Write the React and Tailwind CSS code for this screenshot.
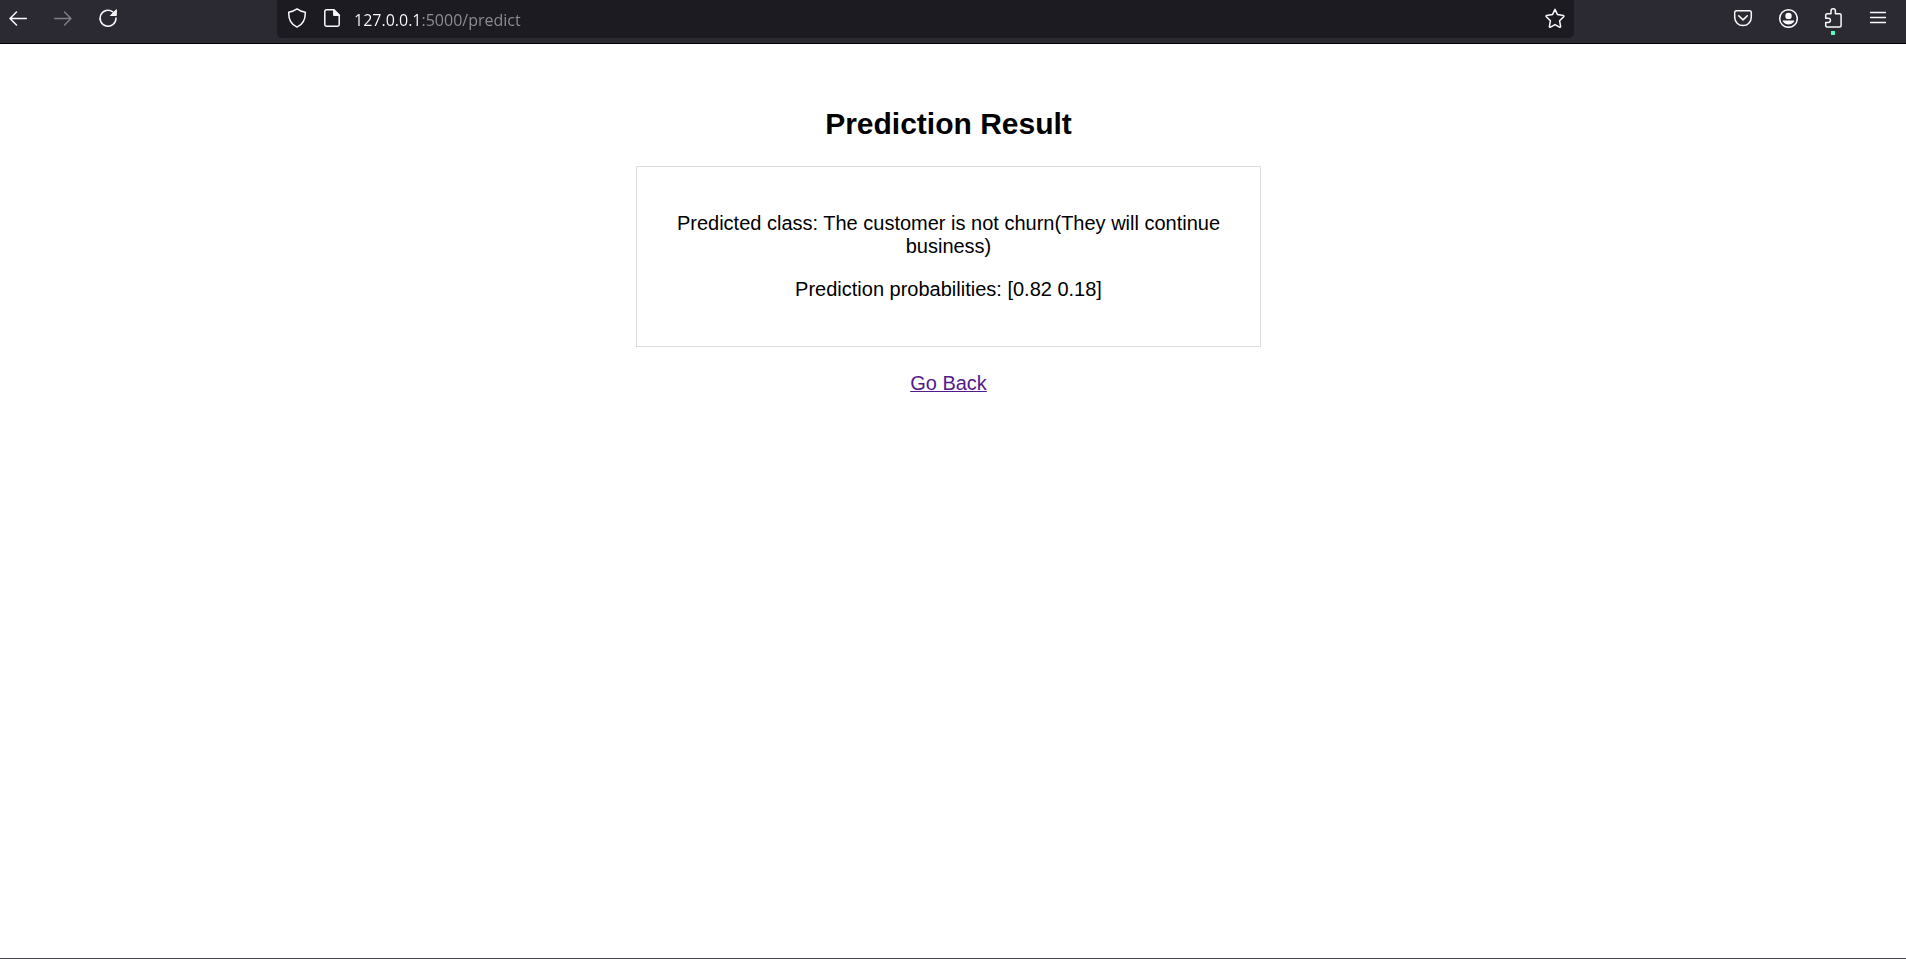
import React from "react";

function Icon({ children, className = "" }) {
  return (
    <svg
      viewBox="0 0 20 20"
      className={`h-5 w-5 shrink-0 ${className}`}
      fill="none"
      stroke="currentColor"
      strokeWidth="1.5"
      strokeLinecap="round"
      strokeLinejoin="round"
      aria-hidden="true"
    >
      {children}
    </svg>
  );
}

function ToolbarButton({ label, children, disabled = false }) {
  return (
    <button
      type="button"
      aria-label={label}
      disabled={disabled}
      className="relative flex h-9 w-9 items-center justify-center text-[#fbfbfe] disabled:text-[#7f7e85]"
    >
      {children}
    </button>
  );
}

function AddressBar() {
  return (
    <div className="flex h-[38px] flex-1 items-start rounded-b-[5px] bg-[#1c1b22] px-[9px] text-[#fbfbfe]">
      <button type="button" aria-label="Tracking protection" className="ml-px flex h-9 w-5 items-center">
        <Icon>
          <path d="M10 .9 C12.3 2.6 15.2 3.7 18.3 4.2 C18.5 11.2 15.9 16.6 10 19.1 C4.1 16.6 1.5 11.2 1.7 4.2 C4.8 3.7 7.7 2.6 10 .9Z" />
        </Icon>
      </button>
      <button type="button" aria-label="Site information" className="ml-[15px] flex h-9 w-5 items-center">
        <Icon>
          <path d="M12 1.8H4.4A1.6 1.6 0 0 0 2.8 3.4v13.2a1.6 1.6 0 0 0 1.6 1.6h11.2a1.6 1.6 0 0 0 1.6-1.6V7z" />
          <path d="M11.6 1.8v5.6h5.6z" fill="currentColor" strokeWidth="1" />
        </Icon>
      </button>
      <input
        type="text"
        aria-label="Address"
        defaultValue="127.0.0.1:5000/predict"
        spellCheck={false}
        className="ml-3 h-10 min-w-0 flex-1 bg-[linear-gradient(to_right,#ffffff_66px,#8f8f97_66px)] bg-clip-text p-0 font-['Open_Sans',sans-serif] text-base text-transparent caret-white outline-none"
      />
      <button type="button" aria-label="Bookmark this page" className="flex h-9 w-5 items-center">
        <Icon>
          <path d="M10 1.4l2.5 5.2 5.8.8a.8.8 0 0 1 .4 1.3l-4.1 4.1 1 5.6a.75.75 0 0 1-1.1.8L10 16.6l-4.5 2.6a.75.75 0 0 1-1.1-.8l1-5.6L1.3 8.7a.8.8 0 0 1 .4-1.3l5.8-.8z" />
        </Icon>
      </button>
    </div>
  );
}

function BrowserToolbar() {
  return (
    <header className="flex h-11 items-start gap-[151px] border-b border-black bg-[#2b2a33] pr-2.5">
      <nav aria-label="History" className="flex gap-[9px]">
        <ToolbarButton label="Back">
          <Icon>
            <path d="M18.3 10.5H2M8.500 4L2 10.500l6.500 6.500" />
          </Icon>
        </ToolbarButton>
        <ToolbarButton label="Forward" disabled>
          <Icon>
            <path d="M1.700 10.500H18M11.500 4l6.500 6.500-6.500 6.500" />
          </Icon>
        </ToolbarButton>
        <ToolbarButton label="Reload">
          <Icon>
            <path d="M18 10A8 8 0 1 1 14.800 3.800" />
            <path d="M18.300 2v5.500h-5.500z" fill="currentColor" strokeWidth="1" />
          </Icon>
        </ToolbarButton>
      </nav>

      <AddressBar />

      <div className="flex gap-[9px]">
        <ToolbarButton label="Save to Pocket">
          <Icon>
            <path d="M3.300 2.700h13.400a1.600 1.600 0 0 1 1.600 1.600v5A8.300 8.300 0 0 1 1.700 9.300v-5a1.600 1.600 0 0 1 1.600-1.600z" />
            <path d="M5.700 7.700L10 11.900l4.300-4.200" />
          </Icon>
        </ToolbarButton>
        <ToolbarButton label="Account">
          <Icon>
            <circle cx="10.500" cy="10.500" r="8.800" />
            <circle cx="10.500" cy="7.900" r="3.200" fill="currentColor" stroke="none" />
            <path d="M5.300 12.600h10.400c.5 0 .7.400.4.900-2.600 4-8.600 4-11.200 0-.3-.5-.1-.9.4-.9z" fill="currentColor" stroke="none" />
          </Icon>
        </ToolbarButton>
        <ToolbarButton label="Extensions">
          <Icon>
            <path d="M8 5.700V3a2.200 2.200 0 0 1 4.400 0v2.700h4.200a1.500 1.500 0 0 1 1.500 1.500v10.300a1.500 1.500 0 0 1-1.500 1.500H4.200a1.500 1.500 0 0 1-1.500-1.500v-3.100h2.700a2 2 0 0 0 0-4.100H2.700V7.200a1.500 1.500 0 0 1 1.500-1.500z" />
          </Icon>
          <span className="absolute top-[31px] left-4 h-1 w-1 bg-[#54ffbd]" />
        </ToolbarButton>
        <ToolbarButton label="Menu">
          <Icon>
            <path d="M2.500 4.500h15M2.500 9.500h15M2.500 14.500h15" strokeWidth="1.300" />
          </Icon>
        </ToolbarButton>
      </div>
    </header>
  );
}

export default function App() {
  return (
    <div className="flex min-h-screen flex-col border-b border-[#4a4950] bg-white">
      <BrowserToolbar />
      <main className="flex flex-1 flex-col items-center pt-[62px] pr-[25px] pl-4 text-center font-['Liberation_Sans',Arial,sans-serif] text-[20px] leading-[23px] text-black">
        <h2 className="text-[30px] leading-[35px] font-bold">Prediction Result</h2>
        <section className="mt-[25px] flex w-full max-w-[625px] flex-col gap-5 border border-[#dddddd] px-[25px] py-[45px]">
          <p>Predicted class: The customer is not churn(They will continue business)</p>
          <p>Prediction probabilities: [0.82 0.18]</p>
        </section>
        <a href="/" className="mt-[25px] text-[#551a8b] underline decoration-1">
          Go Back
        </a>
      </main>
    </div>
  );
}
